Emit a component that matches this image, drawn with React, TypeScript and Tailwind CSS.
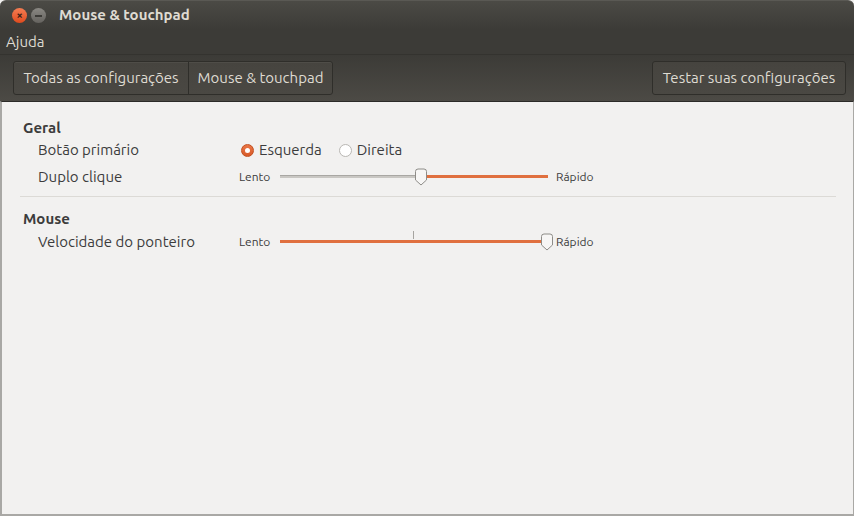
import React from "react";

const font = "font-['Ubuntu','Open_Sans','Noto_Sans',sans-serif]";

function Radio({ checked }: { checked: boolean }) {
  return checked ? (
    <span className="w-[13px] h-[13px] rounded-full bg-gradient-to-b from-[#ea7646] to-[#d85a28] border border-[#c24f1f] flex items-center justify-center">
      <span className="w-[5px] h-[5px] rounded-full bg-white" />
    </span>
  ) : (
    <span className="w-[13px] h-[13px] rounded-full bg-white border border-[#b9b7b3]" />
  );
}

function Thumb() {
  return (
    <svg width="14" height="18" viewBox="0 0 14 18" className="block">
      <path d="M1.5 3.5 Q1.5 1 4 1 L10 1 Q12.5 1 12.5 3.5 L12.5 12 L7 17 L1.5 12 Z" fill="#f7f6f5" stroke="#8e8c88" strokeWidth="1" />
    </svg>
  );
}

function Slider({ value, mark, fillRight }: { value: number; mark?: boolean; fillRight?: boolean }) {
  const w = 268;
  const pos = Math.round(w * value);
  return (
    <div className="flex items-center">
      <span className="text-[12px] text-[#3c3c3c] w-[41px]">Lento</span>
      <div className="relative w-[268px] h-[20px]">
        {fillRight ? (
          <>
            <div className="absolute top-[8px] left-0 h-[3px] bg-[#c9c7c3] border-t border-[#a9a7a3]" style={{ width: pos }} />
            <div className="absolute top-[8px] h-[3px] bg-[#e0703f]" style={{ left: pos, width: w - pos }} />
          </>
        ) : (
          <div className="absolute top-[8px] left-0 h-[3px] bg-[#e0703f]" style={{ width: pos }} />
        )}
        {mark && <div className="absolute top-[-1px] left-[133px] w-px h-[8px] bg-[#a6a4a0]" />}
        <div className="absolute top-[1px]" style={{ left: pos - 7 }}>
          <Thumb />
        </div>
      </div>
      <span className="text-[12px] text-[#3c3c3c] ml-[8px]">Rápido</span>
    </div>
  );
}

function ToolButton({ children, className = "" }: { children: React.ReactNode; className?: string }) {
  return (
    <div className={`h-[32px] flex items-center justify-center text-[15px] text-[#dfdbd2] ${className}`}>{children}</div>
  );
}

export default function App() {
  return (
    <div className={`w-[854px] h-[516px] flex flex-col overflow-hidden bg-[#f2f1f0] ${font}`}>
      <div className="h-[30px] flex items-center bg-gradient-to-b from-[#4b4a45] to-[#3c3b37] rounded-t-[6px] border-t border-[#5a5954]">
        <div className="flex items-center ml-[12px] gap-[4px]">
          <span className="w-[15px] h-[15px] rounded-full bg-gradient-to-b from-[#f57d52] to-[#df4a1c] flex items-center justify-center text-[#3c2218] text-[11px] leading-none font-bold">×</span>
          <span className="w-[15px] h-[15px] rounded-full bg-gradient-to-b from-[#8a8883] to-[#65635f] flex items-center justify-center">
            <span className="w-[7px] h-[2px] bg-[#3c3b37]" />
          </span>
        </div>
        <span className="ml-[13px] text-[15px] font-bold text-[#dfdbd2]">Mouse &amp; touchpad</span>
      </div>
      <div className="h-[24px] flex items-center bg-[#3c3b37] px-[6px] text-[15px] text-[#dfdbd2]">Ajuda</div>
      <div className="h-[47px] flex items-center justify-between bg-gradient-to-b from-[#3c3b37] to-[#4c4a45] border-t border-[#34332f] px-[13px]">
        <div className="flex rounded-[3px] border border-[#2f2e2a] bg-gradient-to-b from-[#46443f] to-[#4a4843] shadow-[inset_0_1px_0_rgba(255,255,255,0.05)]">
          <ToolButton className="w-[175px] border-r border-[#2f2e2a]">Todas as configurações</ToolButton>
          <ToolButton className="w-[143px]">Mouse &amp; touchpad</ToolButton>
        </div>
        <div className="flex rounded-[3px] border border-[#2f2e2a] bg-gradient-to-b from-[#46443f] to-[#4a4843] mr-[-5px]">
          <ToolButton className="w-[192px]">Testar suas configurações</ToolButton>
        </div>
      </div>
      <div className="flex-1 bg-[#f2f1f0] border-l-2 border-b-2 border-r border-[#a9a8a5] border-t border-t-[#2c2b28] text-[#3c3c3c] text-[15px]">
        <div className="pt-[16px] pl-[21px] pr-[18px]">
          <div className="font-bold leading-[20px]">Geral</div>
          <div className="pl-[15px]">
            <div className="flex items-center h-[24px]">
              <span className="w-[203px]">Botão primário</span>
              <div className="flex items-center gap-[5px]">
                <Radio checked />
                <span>Esquerda</span>
                <span className="w-[7px]" />
                <Radio checked={false} />
                <span>Direita</span>
              </div>
            </div>
            <div className="flex items-center h-[30px]">
              <span className="w-[201px]">Duplo clique</span>
              <Slider value={0.525} fillRight />
            </div>
          </div>
          <div className="h-px bg-[#dcdad6] mt-[4px] mr-[-1px] ml-[-3px]" />
          <div className="font-bold leading-[20px] mt-[12px]">Mouse</div>
          <div className="pl-[15px]">
            <div className="flex items-center h-[26px]">
              <span className="w-[201px]">Velocidade do ponteiro</span>
              <Slider value={0.997} mark />
            </div>
          </div>
        </div>
      </div>
    </div>
  );
}
